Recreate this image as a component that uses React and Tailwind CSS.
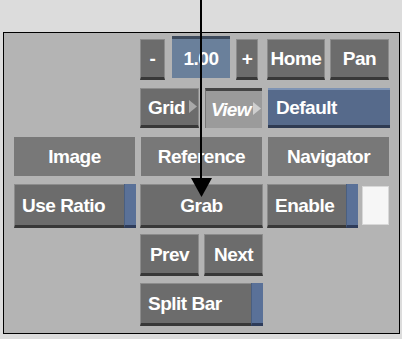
import React from 'react';

const Btn = ({ className = '', children, strip, justify = 'justify-center' }) => (
    <div className={`relative flex items-center ${justify} bg-[#6c6c6c] border border-[#8c8c8c] border-b-[3px] border-b-[#383838] text-white text-[19px] font-bold tracking-[-0.5px] ${className}`}>
        <span className="leading-none">{children}</span>
        {strip && <div className="absolute right-[-1px] top-[-1px] bottom-[-3px] w-[12px] bg-[#5a7198] border-l border-[#4a5f80] border-b-[3px] border-b-[#2e3c5a]" />}
    </div>
);

const Label = ({ className = '', children }) => (
    <div className={`flex items-center justify-center bg-[#787878] text-white text-[19px] font-bold tracking-[-0.5px] ${className}`}>
        <span className="leading-none">{children}</span>
    </div>
);

const Tri = ({ color }) => (
    <svg width="8" height="13" viewBox="0 0 8 13" className="absolute right-[1px] top-[11px]">
        <polygon points="0,0 8,6.5 0,13" fill={color} />
    </svg>
);

export default function App() {
    return (
        <div className="relative w-[402px] h-[339px] bg-[#dcdcdc] pt-[32px] pl-[3px] font-['Liberation_Sans',Arial,sans-serif] overflow-hidden">
            <div className="w-[397px] h-[302px] border border-black bg-[#b4b4b4] pt-[6px] flex flex-col">
                {/* row 1 */}
                <div className="flex h-[41px] pl-[136px]">
                    <Btn className="w-[25px]">-</Btn>
                    <div className="ml-[7px] w-[58px] h-[42px] -mt-[3px] flex items-center justify-center bg-[#6a809b] border-t-[3px] border-t-[#3d4a5c] text-white text-[19px] font-bold tracking-[-0.5px]">
                        <span className="leading-none">1.00</span>
                    </div>
                    <Btn className="ml-[6px] w-[22px]">+</Btn>
                    <Btn className="ml-[9px] w-[58px]">Home</Btn>
                    <Btn className="ml-[5px] w-[59px]">Pan</Btn>
                </div>
                {/* row 2 */}
                <div className="flex h-[40px] mt-[8px] pl-[136px]">
                    <Btn className="w-[59px] pl-[7px]" justify="justify-start">
                        Grid
                        <Tri color="#a9a9a9" />
                    </Btn>
                    <div className="relative ml-[6px] w-[57px] h-[40px] flex items-center pl-[5px] bg-[#9b9b9b] border-t-[3px] border-t-[#444] border-l border-l-[#777] text-white text-[19px] font-bold italic tracking-[-0.7px]">
                        <span className="leading-none">View</span>
                        <Tri color="#cfcfcf" />
                    </div>
                    <div className="ml-[6px] w-[122px] flex items-center pl-[8px] bg-[#566a8b] border-t-[2px] border-t-[#7e93b4] border-b-[3px] border-b-[#2f3b52] text-white text-[19px] font-bold tracking-[-0.5px]">
                        <span className="leading-none">Default</span>
                    </div>
                </div>
                {/* row 3 */}
                <div className="flex h-[39px] mt-[9px] pl-[10px]">
                    <Label className="w-[121px]">Image</Label>
                    <Label className="ml-[6px] w-[121px]">Reference</Label>
                    <Label className="ml-[6px] w-[121px]">Navigator</Label>
                </div>
                {/* row 4 */}
                <div className="flex h-[44px] mt-[8px] pl-[10px]">
                    <Btn className="w-[122px] pl-[7px]" justify="justify-start" strip>Use Ratio</Btn>
                    <Btn className="ml-[4px] w-[123px]">Grab</Btn>
                    <Btn className="ml-[4px] w-[91px] pl-[7px]" justify="justify-start" strip>Enable</Btn>
                    <div className="ml-[4px] mt-[2px] w-[27px] h-[39px] bg-[#f6f6f6] border border-[#d8d8d8]" />
                </div>
                {/* row 5 */}
                <div className="flex h-[42px] mt-[6px] pl-[136px]">
                    <Btn className="w-[59px]">Prev</Btn>
                    <Btn className="ml-[5px] w-[59px]">Next</Btn>
                </div>
                {/* row 6 */}
                <div className="flex h-[43px] mt-[7px] pl-[136px]">
                    <Btn className="w-[123px] pl-[7px]" justify="justify-start" strip>Split Bar</Btn>
                </div>
            </div>
            {/* callout arrow */}
            <svg width="24" height="200" viewBox="0 0 24 200" className="absolute left-[190px] top-0">
                <line x1="11" y1="0" x2="11" y2="182" stroke="#000" strokeWidth="2" />
                <polygon points="1,178 22,178 11.5,197" fill="#000" />
            </svg>
        </div>
    );
}
